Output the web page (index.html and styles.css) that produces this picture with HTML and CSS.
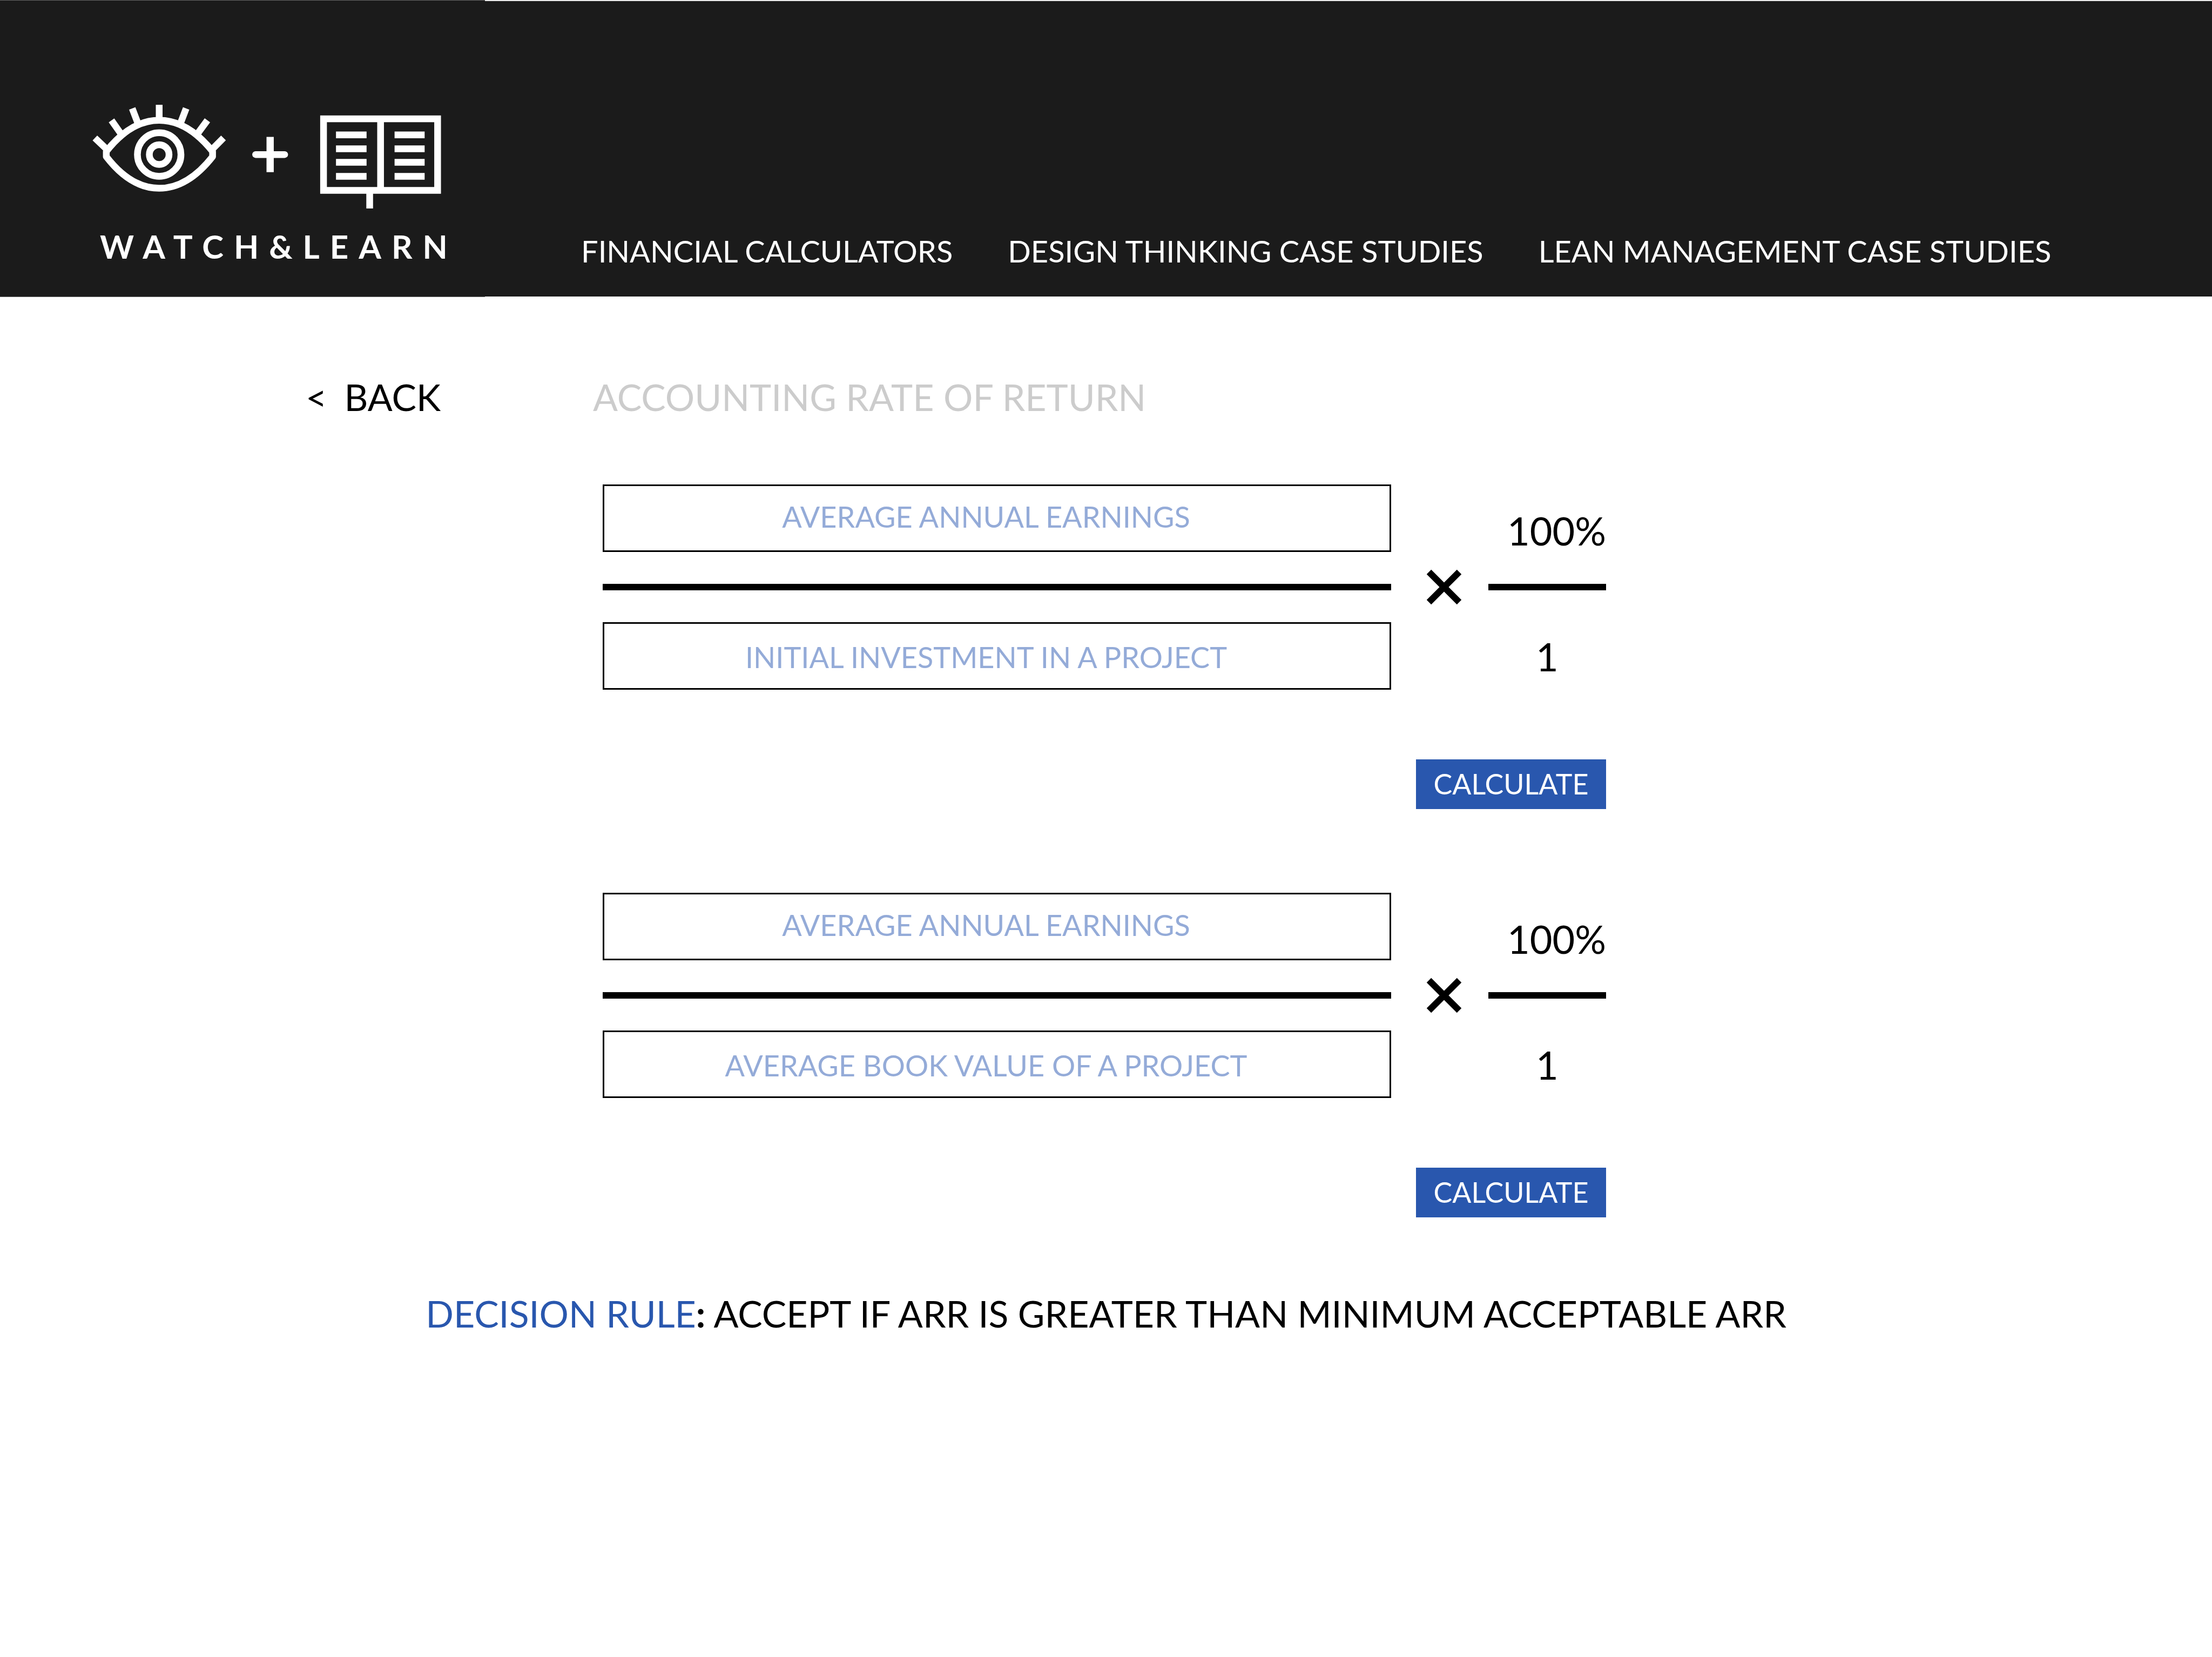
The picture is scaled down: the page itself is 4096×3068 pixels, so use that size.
FILE: index.html
```html
<!DOCTYPE html>
<html lang="en">
<head>
<meta charset="utf-8">
<meta name="viewport" content="width=device-width, initial-scale=1">
<title>Accounting Rate of Return - Watch &amp; Learn</title>
<link rel="stylesheet" href="styles.css">
</head>
<body>
<header class="site-header">
  <a class="brand" href="#">
    <svg class="brand-art" viewBox="176 200 676 204" fill="none" stroke="#fff" stroke-width="13" aria-hidden="true">
      <path stroke-linejoin="round" d="M205 292V302Q252 363 307 363Q362 363 410 302V292Q362 232 307 232Q252 232 205 292Z"/>
      <circle cx="307" cy="298" r="42"/>
      <circle cx="307" cy="298" r="19"/>
      <path d="M307 202V232M255 209L266 238M359 209L348 238M215 232L234 259M400 232L380 259M183 266L206 288M431 266L409 288"/>
      <path stroke-width="14" d="M521 264V332"/>
      <path stroke-width="13" stroke-linecap="round" d="M493 298H549"/>
      <path d="M624 229H844V367H624ZM734 229V367M713 367V402M648 260H707M648 287H707M648 313H707M648 340H707M761 260H819M761 287H819M761 313H819M761 340H819"/>
    </svg>
    <span class="brand-name">WATCH&amp;LEARN</span>
  </a>
  <nav class="site-nav">
    <a href="#">FINANCIAL CALCULATORS</a>
    <a href="#">DESIGN THINKING CASE STUDIES</a>
    <a href="#">LEAN MANAGEMENT CASE STUDIES</a>
  </nav>
</header>
<main class="page">
  <div class="title-row">
    <a class="back" href="#"><span>&lt;</span> <span>BACK</span></a>
    <h1 class="title">ACCOUNTING RATE OF RETURN</h1>
  </div>
  <form class="calculator">
    <div class="fraction">
      <input class="field" type="text" aria-label="Average annual earnings" placeholder="AVERAGE ANNUAL EARNINGS">
      <div class="bar"></div>
      <input class="field" type="text" aria-label="Initial investment in a project" placeholder="INITIAL INVESTMENT IN A PROJECT">
    </div>
    <svg class="times" viewBox="0 0 66 66" stroke="#000" stroke-width="12" aria-label="times"><path d="M5 5L61 61M61 5L5 61"/></svg>
    <div class="fraction">
      <span class="factor-top">100%</span>
      <div class="bar"></div>
      <span class="factor-bottom">1</span>
    </div>
    <button class="calculate" type="button">CALCULATE</button>
  </form>
  <form class="calculator">
    <div class="fraction">
      <input class="field" type="text" aria-label="Average annual earnings" placeholder="AVERAGE ANNUAL EARNINGS">
      <div class="bar"></div>
      <input class="field" type="text" aria-label="Average book value of a project" placeholder="AVERAGE BOOK VALUE OF A PROJECT">
    </div>
    <svg class="times" viewBox="0 0 66 66" stroke="#000" stroke-width="12" aria-label="times"><path d="M5 5L61 61M61 5L5 61"/></svg>
    <div class="fraction">
      <span class="factor-top">100%</span>
      <div class="bar"></div>
      <span class="factor-bottom">1</span>
    </div>
    <button class="calculate" type="button">CALCULATE</button>
  </form>
  <p class="rule"><span class="rule-label">DECISION RULE</span><b>:</b> ACCEPT IF ARR IS GREATER THAN MINIMUM ACCEPTABLE ARR</p>
</main>
</body>
</html>
```
FILE: styles.css
```css
* {
  box-sizing: border-box;
}

body {
  margin: 0;
  background: #fff;
  color: #000;
  font-family: Lato, "Liberation Sans", sans-serif;
  font-size: 68px;
  line-height: 80px;
}

a {
  color: inherit;
  text-decoration: none;
}

.site-header {
  display: flex;
  color: #fff;
}

.brand {
  flex: none;
  display: flex;
  flex-direction: column;
  width: 898px;
  padding: 191px 0 57px 169px;
  border: solid #666;
  border-width: 1px 0;
  background: #1b1b1b;
}

.brand-art {
  width: 649px;
  height: 196px;
}

.brand-name {
  margin: 32px 0 0 16px;
  font-size: 60px;
  font-weight: 700;
  line-height: 72px;
  letter-spacing: 19px;
}

.site-nav {
  flex: 1;
  display: flex;
  align-items: flex-end;
  gap: 102px;
  margin-bottom: 1px;
  padding: 0 0 44px 178px;
  border-top: 2px solid #eee;
  background: #1b1b1b;
  font-size: 56px;
  white-space: nowrap;
}

.page {
  padding: 145px 0 120px;
}

.title-row {
  display: flex;
  padding-left: 566px;
}

.back {
  display: flex;
  gap: 32px;
  width: 532px;
}

.title {
  margin: 0;
  color: #ccc;
  font-size: 68px;
  font-weight: 400;
}

.calculator {
  display: grid;
  grid-template-columns: minmax(0, 1460px) 82px 218px;
  column-gap: 49px;
  align-items: center;
  margin: 122px 0 0 1116px;
  width: fit-content;
}

.calculator + .calculator {
  margin-top: 155px;
}

.fraction {
  display: grid;
  grid-template-rows: 125px 12px 125px;
  row-gap: 59px;
}

.bar {
  background: #000;
}

.field {
  width: 1460px;
  max-width: 100%;
  padding: 0 40px 6px 0;
  border: 3px solid #000;
  border-radius: 0;
  background: #fff;
  color: #2957ae;
  font: inherit;
  font-size: 54px;
  text-align: center;
}

.field:last-child {
  padding: 4px 40px 0 0;
}

.field::placeholder {
  color: #94abd8;
  opacity: 1;
}

.times {
  justify-self: end;
  width: 66px;
  height: 66px;
}

.factor-top,
.factor-bottom {
  font-size: 72px;
}

.factor-top {
  align-self: end;
  justify-self: end;
}

.factor-bottom {
  place-self: center;
}

.calculate {
  grid-column: 1 / -1;
  justify-self: end;
  width: 352px;
  height: 92px;
  margin-top: 129px;
  padding: 0 0 2px;
  border: 0;
  background: #2957ae;
  color: #fff;
  font: inherit;
  font-size: 52px;
}

.rule {
  margin: 138px 0 0;
  text-align: center;
}

.rule-label {
  color: #2957ae;
}
```
